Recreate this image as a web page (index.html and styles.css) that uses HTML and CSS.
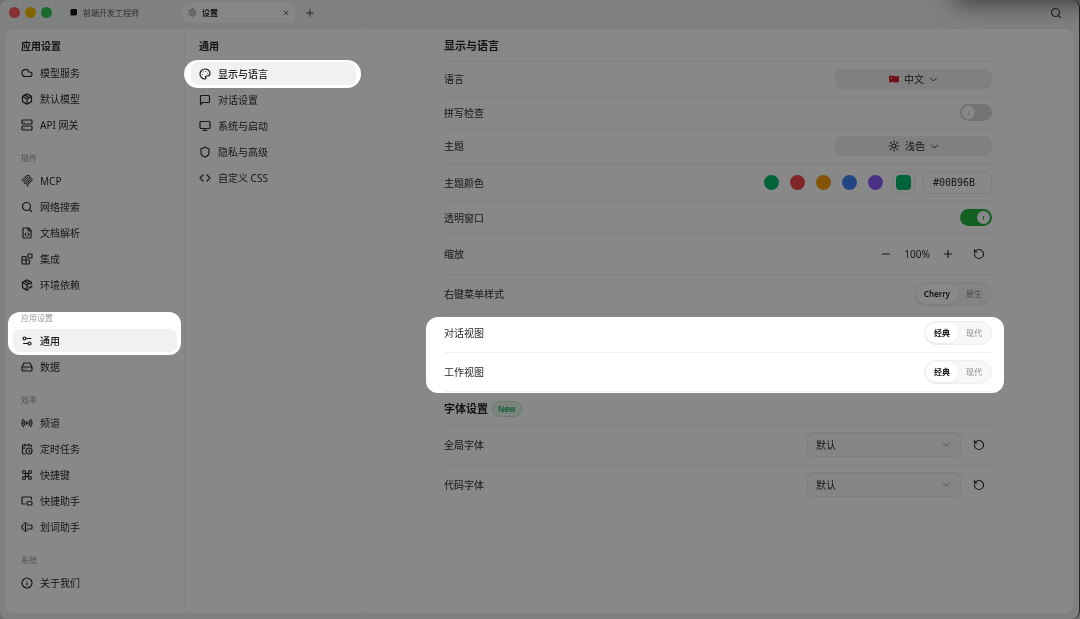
FILE: index.html
```
<!DOCTYPE html>
<html lang="zh-CN">
<head>
  <meta charset="UTF-8">
  <title>设置</title>
  <link rel="stylesheet" href="styles.css">
</head>
<body>
  <div class="window">
    <header class="titlebar">
      <div class="lights">
        <span class="light red"></span>
        <span class="light yellow"></span>
        <span class="light green"></span>
      </div>
      <a class="tab" href="#">
        <svg class="tab-logo" viewBox="0 0 9 9"><rect x="1.500" y="1" width="6.500" height="6" rx="1" fill="#111"/><rect x="1" y="7" width="6" height="1" fill="#888"/></svg>
        前端开发工程师
      </a>
      <div class="tab active">
        <svg class="icon" viewBox="0 0 24 24"><path d="M12.22 2h-.44a2 2 0 0 0-2 2v.18a2 2 0 0 1-1 1.73l-.43.25a2 2 0 0 1-2 0l-.15-.08a2 2 0 0 0-2.73.73l-.22.38a2 2 0 0 0 .73 2.73l.15.1a2 2 0 0 1 1 1.72v.51a2 2 0 0 1-1 1.74l-.15.09a2 2 0 0 0-.73 2.73l.22.38a2 2 0 0 0 2.73.73l.15-.08a2 2 0 0 1 2 0l.43.25a2 2 0 0 1 1 1.73V20a2 2 0 0 0 2 2h.44a2 2 0 0 0 2-2v-.18a2 2 0 0 1 1-1.73l.43-.25a2 2 0 0 1 2 0l.15.08a2 2 0 0 0 2.73-.73l.22-.39a2 2 0 0 0-.73-2.73l-.15-.08a2 2 0 0 1-1-1.74v-.5a2 2 0 0 1 1-1.74l.15-.09a2 2 0 0 0 .73-2.73l-.22-.38a2 2 0 0 0-2.73-.73l-.15.08a2 2 0 0 1-2 0l-.43-.25a2 2 0 0 1-1-1.73V4a2 2 0 0 0-2-2z"/><circle cx="12" cy="12" r="3"/></svg>
        <a href="#">设置</a>
        <button class="tab-close" aria-label="关闭"><svg class="icon" viewBox="0 0 24 24"><path d="M18 6 6 18M6 6l12 12"/></svg></button>
      </div>
      <button class="bar-btn" aria-label="新建"><svg class="icon" viewBox="0 0 24 24"><path d="M4 12h16M12 4v16"/></svg></button>
      <button class="bar-btn search" aria-label="搜索"><svg class="icon" viewBox="0 0 24 24"><circle cx="11" cy="11" r="8"/><path d="m21 21-4.34-4.34"/></svg></button>
    </header>

    <div class="panel">
      <nav class="sidebar">
        <h2>应用设置</h2>
        <ul>
          <li><a href="#"><svg class="icon" viewBox="0 0 24 24"><path d="M17.5 19H9a7 7 0 1 1 6.71-9h1.79a4.5 4.5 0 1 1 0 9Z"/></svg>模型服务</a></li>
          <li><a href="#"><svg class="icon" viewBox="0 0 24 24"><path d="M11 21.73a2 2 0 0 0 2 0l7-4A2 2 0 0 0 21 16V8a2 2 0 0 0-1-1.73l-7-4a2 2 0 0 0-2 0l-7 4A2 2 0 0 0 3 8v8a2 2 0 0 0 1 1.73z"/><path d="M12 22V12M3.29 7 12 12l8.71-5M7.5 4.27l9 5.15"/></svg>默认模型</a></li>
          <li><a href="#"><svg class="icon" viewBox="0 0 24 24"><rect x="2" y="2" width="20" height="8" rx="2"/><rect x="2" y="14" width="20" height="8" rx="2"/><path d="M6 6h.01M6 18h.01"/></svg>API 网关</a></li>
        </ul>
        <h3>插件</h3>
        <ul>
          <li><a href="#"><svg class="icon solid" viewBox="0 0 24 24"><path d="M15.688 2.343a2.588 2.588 0 00-3.61 0l-9.626 9.44a.863.863 0 01-1.203 0 .823.823 0 010-1.18l9.626-9.44a4.313 4.313 0 016.016 0 4.116 4.116 0 011.204 3.54 4.3 4.3 0 013.609 1.18l.05.05a4.115 4.115 0 010 5.9l-8.706 8.537a.274.274 0 000 .393l1.788 1.754a.823.823 0 010 1.18.863.863 0 01-1.203 0l-1.788-1.753a1.92 1.92 0 010-2.754l8.706-8.538a2.47 2.47 0 000-3.54l-.05-.049a2.588 2.588 0 00-3.607-.003l-7.172 7.034-.002.002-.098.097a.863.863 0 01-1.204 0 .823.823 0 010-1.18l7.273-7.133a2.47 2.47 0 00-.003-3.537z"/><path d="M14.485 4.703a.823.823 0 000-1.18.863.863 0 00-1.204 0l-7.119 6.982a4.115 4.115 0 000 5.9 4.314 4.314 0 006.016 0l7.12-6.982a.823.823 0 000-1.18.863.863 0 00-1.204 0l-7.119 6.982a2.588 2.588 0 01-3.61 0 2.47 2.47 0 010-3.54l7.12-6.982z"/></svg>MCP</a></li>
          <li><a href="#"><svg class="icon" viewBox="0 0 24 24"><circle cx="11" cy="11" r="8"/><path d="m21 21-4.34-4.34"/></svg>网络搜索</a></li>
          <li><a href="#"><svg class="icon" viewBox="0 0 24 24"><path d="M15 2H6a2 2 0 0 0-2 2v16a2 2 0 0 0 2 2h12a2 2 0 0 0 2-2V7Z"/><path d="M14 2v4a2 2 0 0 0 2 2h4M10 12.5 8 15l2 2.500M14 12.500l2 2.500-2 2.500"/></svg>文档解析</a></li>
          <li><a href="#"><svg class="icon" viewBox="0 0 24 24"><rect x="14" y="2" width="8" height="8" rx="1"/><path d="M10 21V8a1 1 0 0 0-1-1H4a2 2 0 0 0-2 2v11a2 2 0 0 0 2 2h11a2 2 0 0 0 2-2v-5a1 1 0 0 0-1-1H2"/></svg>集成</a></li>
          <li><a href="#"><svg class="icon" viewBox="0 0 24 24"><path d="m16 16 2 2 4-4"/><path d="M21 10V8a2 2 0 0 0-1-1.730l-7-4a2 2 0 0 0-2 0l-7 4A2 2 0 0 0 3 8v8a2 2 0 0 0 1 1.730l7 4a2 2 0 0 0 2 0l2-1.140"/><path d="m7.500 4.270 9 5.150M3.290 7 12 12l8.710-5M12 22V12"/></svg>环境依赖</a></li>
        </ul>
        <h3>应用设置</h3>
        <ul>
          <li><a class="active" href="#"><svg class="icon" viewBox="0 0 24 24"><path d="M20 7h-9M14 17H5"/><circle cx="17" cy="17" r="3"/><circle cx="7" cy="7" r="3"/></svg>通用</a></li>
          <li><a href="#"><svg class="icon" viewBox="0 0 24 24"><path d="M22 12H2M5.450 5.110 2 12v6a2 2 0 0 0 2 2h16a2 2 0 0 0 2-2v-6l-3.450-6.890A2 2 0 0 0 16.760 4H7.240a2 2 0 0 0-1.790 1.110zM6 16h.01M10 16h.01"/></svg>数据</a></li>
        </ul>
        <h3>效率</h3>
        <ul>
          <li><a href="#"><svg class="icon" viewBox="0 0 24 24"><path d="M4.900 19.100C1 15.200 1 8.800 4.900 4.900M7.800 16.200c-2.300-2.300-2.300-6.100 0-8.500M16.200 7.800c2.300 2.300 2.300 6.100 0 8.500M19.100 4.900C23 8.800 23 15.100 19.100 19"/><circle cx="12" cy="12" r="2"/></svg>频道</a></li>
          <li><a href="#"><svg class="icon" viewBox="0 0 24 24"><path d="M16 14v2.200l1.600 1M16 2v4M21 7.500V6a2 2 0 0 0-2-2H5a2 2 0 0 0-2 2v14a2 2 0 0 0 2 2h3.500M3 10h5M8 2v4"/><circle cx="16" cy="16" r="6"/></svg>定时任务</a></li>
          <li><a href="#"><svg class="icon" viewBox="0 0 24 24"><path d="M15 6v12a3 3 0 1 0 3-3H6a3 3 0 1 0 3 3V6a3 3 0 1 0-3 3h12a3 3 0 1 0-3-3"/></svg>快捷键</a></li>
          <li><a href="#"><svg class="icon" viewBox="0 0 24 24"><path d="M21 9V6a2 2 0 0 0-2-2H4a2 2 0 0 0-2 2v10c0 1.100.900 2 2 2h4"/><rect x="12" y="13" width="10" height="7" rx="2"/></svg>快捷助手</a></li>
          <li><a href="#"><svg class="icon" viewBox="0 0 24 24"><path d="M12 20h-1a2 2 0 0 1-2-2 2 2 0 0 1-2 2H6M13 8h7a2 2 0 0 1 2 2v4a2 2 0 0 1-2 2h-7M5 16H4a2 2 0 0 1-2-2v-4a2 2 0 0 1 2-2h1M6 4h1a2 2 0 0 1 2 2 2 2 0 0 1 2-2h1M9 6v12"/></svg>划词助手</a></li>
        </ul>
        <h3>系统</h3>
        <ul>
          <li><a href="#"><svg class="icon" viewBox="0 0 24 24"><circle cx="12" cy="12" r="10"/><path d="M12 16v-4M12 8h.01"/></svg>关于我们</a></li>
        </ul>
      </nav>

      <nav class="sidebar sub">
        <h2>通用</h2>
        <ul>
          <li><a class="active" href="#"><svg class="icon" viewBox="0 0 24 24"><path d="M12 22a1 1 0 0 1 0-20 10 9 0 0 1 10 9 5 5 0 0 1-5 5h-2.250a1.750 1.750 0 0 0-1.400 2.800l.3.4a1.750 1.750 0 0 1-1.400 2.800z"/><path d="M13.500 6.500h.01M17.500 10.500h.01M6.500 12.500h.01M8.500 7.500h.01"/></svg>显示与语言</a></li>
          <li><a href="#"><svg class="icon" viewBox="0 0 24 24"><path d="M21 15a2 2 0 0 1-2 2H7l-4 4V5a2 2 0 0 1 2-2h14a2 2 0 0 1 2 2z"/></svg>对话设置</a></li>
          <li><a href="#"><svg class="icon" viewBox="0 0 24 24"><rect x="2" y="3" width="20" height="14" rx="2"/><path d="M8 21h8M12 17v4"/></svg>系统与启动</a></li>
          <li><a href="#"><svg class="icon" viewBox="0 0 24 24"><path d="M20 13c0 5-3.500 7.500-7.660 8.950a1 1 0 0 1-.67-.01C7.500 20.500 4 18 4 13V6a1 1 0 0 1 1-1c2 0 4.500-1.200 6.240-2.720a1.170 1.170 0 0 1 1.520 0C14.510 3.810 17 5 19 5a1 1 0 0 1 1 1z"/></svg>隐私与高级</a></li>
          <li><a href="#"><svg class="icon" viewBox="0 0 24 24"><path d="m16 18 6-6-6-6M8 6l-6 6 6 6"/></svg>自定义 CSS</a></li>
        </ul>
      </nav>

      <main class="content">
        <h1>显示与语言</h1>
        <div class="row">
          <label for="language">语言</label>
          <div class="pill">
            <svg class="flag" viewBox="0 0 10 8"><path d="M0 1q2.500-1 5 0t5-.5v6.500q-2.500 1-5 .3T0 7.500z" fill="#d81e2c"/><path d="m2.300 1.800.4 1 1 .1-.8.600.3 1-.9-.5-.9.5.3-1-.8-.6 1-.1z" fill="#f5a623"/></svg>
            <select id="language"><option>中文</option></select>
            <svg class="icon chevron" viewBox="0 0 24 24"><path d="m4 8 8 8 8-8"/></svg>
          </div>
        </div>
        <div class="row">
          <label for="spell">拼写检查</label>
          <input class="switch" type="checkbox" id="spell">
        </div>
        <div class="row">
          <label for="theme">主题</label>
          <div class="pill">
            <svg class="icon" viewBox="0 0 24 24"><circle cx="12" cy="12" r="4"/><path d="M12 2v2M12 20v2M4.930 4.930l1.410 1.410M17.660 17.660l1.410 1.410M2 12h2M20 12h2M6.340 17.660l-1.410 1.410M19.070 4.930l-1.410 1.410"/></svg>
            <select id="theme"><option>浅色</option></select>
            <svg class="icon chevron" viewBox="0 0 24 24"><path d="m4 8 8 8 8-8"/></svg>
          </div>
        </div>
        <div class="row">
          <label for="color">主题颜色</label>
          <div class="colors">
            <div class="dots">
              <button class="dot c-green" aria-label="绿色"></button>
              <button class="dot c-red" aria-label="红色"></button>
              <button class="dot c-amber" aria-label="橙色"></button>
              <button class="dot c-blue" aria-label="蓝色"></button>
              <button class="dot c-violet" aria-label="紫色"></button>
            </div>
            <button class="picker" aria-label="选择颜色"><span class="c-green"></span></button>
            <input class="hex" type="text" id="color" value="#00B96B">
          </div>
        </div>
        <div class="row">
          <label for="transparent">透明窗口</label>
          <input class="switch" type="checkbox" id="transparent" checked>
        </div>
        <div class="row">
          <span>缩放</span>
          <div class="tools zoom">
            <button class="tool" aria-label="缩小"><svg class="icon" viewBox="0 0 24 24"><path d="M5 12h14"/></svg></button>
            <span class="percent">100%</span>
            <button class="tool" aria-label="放大"><svg class="icon" viewBox="0 0 24 24"><path d="M5 12h14M12 5v14"/></svg></button>
            <button class="tool" aria-label="重置"><svg class="icon" viewBox="0 0 24 24"><path d="M3 12a9 9 0 1 0 9-9 9.750 9.750 0 0 0-6.740 2.740L3 8"/><path d="M3 3v5h5"/></svg></button>
          </div>
        </div>
        <div class="row">
          <span>右键菜单样式</span>
          <div class="segment"><button class="on">Cherry</button><button>原生</button></div>
        </div>
        <div class="row">
          <span>对话视图</span>
          <div class="segment"><button class="on">经典</button><button>现代</button></div>
        </div>
        <div class="row">
          <span>工作视图</span>
          <div class="segment"><button class="on">经典</button><button>现代</button></div>
        </div>
        <h1>字体设置 <span class="badge">New</span></h1>
        <div class="row">
          <label for="font">全局字体</label>
          <div class="tools">
            <div class="select"><select id="font"><option>默认</option></select><svg class="icon chevron" viewBox="0 0 24 24"><path d="m4 8 8 8 8-8"/></svg></div>
            <button class="tool" aria-label="重置"><svg class="icon" viewBox="0 0 24 24"><path d="M3 12a9 9 0 1 0 9-9 9.750 9.750 0 0 0-6.740 2.740L3 8"/><path d="M3 3v5h5"/></svg></button>
          </div>
        </div>
        <div class="row">
          <label for="code-font">代码字体</label>
          <div class="tools">
            <div class="select"><select id="code-font"><option>默认</option></select><svg class="icon chevron" viewBox="0 0 24 24"><path d="m4 8 8 8 8-8"/></svg></div>
            <button class="tool" aria-label="重置"><svg class="icon" viewBox="0 0 24 24"><path d="M3 12a9 9 0 1 0 9-9 9.750 9.750 0 0 0-6.740 2.740L3 8"/><path d="M3 3v5h5"/></svg></button>
          </div>
        </div>
      </main>
    </div>
  </div>

  <!-- dimmed layer, white areas stay bright -->
  <div class="spotlight">
    <div class="spot spot-menu"></div>
    <div class="spot spot-sub"></div>
    <div class="spot spot-rows"></div>
  </div>
  <div class="corner-shadow"></div>
</body>
</html>
```
FILE: styles.css
```
* { box-sizing: border-box; }
body { margin: 0; position: relative; min-height: 100vh; display: flex; overflow: hidden; background: #d6d0d2; color: #2b2b2b; font: 10px/14px "Noto Sans", "Noto Sans CJK SC", sans-serif; }
button, input, select { margin: 0; padding: 0; border: none; background: none; color: inherit; font: inherit; }
a { color: inherit; text-decoration: none; }
ul { margin: 0; padding: 0; list-style: none; }
.icon { flex: none; width: 12px; height: 12px; fill: none; stroke: currentColor; stroke-width: 2.4; stroke-linecap: round; stroke-linejoin: round; }
.icon.solid { fill: currentColor; stroke: none; }

.window { flex: 1; display: flex; flex-direction: column; background: #edf1f0; border-right: 1px solid #444; border-radius: 8px; }

/* title bar */
.titlebar { display: flex; align-items: center; height: 29px; padding: 0 17px 4px 9px; color: #555; font-size: 8px; }
.lights { display: flex; gap: 5px; margin-right: 17px; }
.light { width: 11px; height: 11px; border-radius: 50%; }
.red { background: #fa5a60; }
.yellow { background: #f5bd00; }
.green { background: #2cc653; }
.tab { display: flex; align-items: center; gap: 5px; width: 113px; height: 20px; }
.tab-logo { width: 9px; height: 9px; }
.tab .icon { width: 9px; height: 9px; }
.tab.active { padding: 0 5px 0 6px; border-radius: 6px; background: #f9fbfa; color: #222; font-weight: 600; }
.tab.active > .icon { color: #777; }
.tab-close { display: flex; margin-left: auto; color: #555; }
.tab-close .icon { width: 8px; height: 8px; }
.bar-btn { display: flex; margin-left: 10px; color: #444; }
.bar-btn .icon { width: 10px; height: 10px; }
.bar-btn.search { margin-left: auto; }
.bar-btn.search .icon { width: 12px; height: 12px; }

/* columns */
.panel { flex: 1; display: flex; margin: 0 6px 6px; border-radius: 8px; background: #fff; }
.sidebar { width: 179px; padding: 0 7px; border-right: 1px solid #f3f3f3; }
.sidebar.sub { width: 178px; padding: 0 6px; }
.sidebar h2 { margin: 0; padding: 2px 8px 0; font-size: 10px; font-weight: 600; line-height: 30px; color: #222; }
.sidebar.sub h2 { line-height: 31px; }
.sidebar h3 { margin: 16px 0 5px; padding: 0 8px; font-size: 8px; font-weight: 400; line-height: 12px; color: #999; }
.sidebar ul { display: flex; flex-direction: column; gap: 3px; }
.sidebar li a { display: flex; align-items: center; gap: 7px; height: 23px; padding: 0 8px; border-radius: 7px; }
.sidebar a.active { background: #f1f1f1; color: #1a1a1a; font-weight: 500; }

/* settings */
.content { flex: 1; padding: 0 81px; }
.content h1 { display: flex; align-items: center; gap: 4px; height: 33px; margin: 0; padding-top: 2px; border-bottom: 1px solid #f2f2f2; font-size: 11px; font-weight: 600; color: #222; }
.row { display: flex; align-items: center; justify-content: space-between; padding: 7px 0; border-bottom: 1px solid #f2f2f2; }
.row:last-child { border-bottom: none; }
.pill { display: flex; align-items: center; justify-content: center; gap: 5px; width: 157px; height: 20px; border-radius: 7px; background: #f0f0f0; }
.pill select { appearance: none; }
.pill .chevron { width: 9px; height: 9px; }
.flag { width: 10px; height: 8px; }
.switch { appearance: none; display: flex; align-items: center; width: 32px; height: 17px; padding: 2px; border-radius: 9px; background: #d8d8d8; }
.switch::before { content: ""; width: 13px; height: 13px; border-radius: 50%; background: linear-gradient(#d4d4d4, #d4d4d4) center / 1px 4px no-repeat #fff; }
.switch:checked { justify-content: flex-end; background: #24b33c; }
.switch:checked::before { background: linear-gradient(#24b33c, #24b33c) center / 1px 4px no-repeat #fff; }

.colors { display: flex; align-items: center; gap: 8px; }
.dots { display: flex; gap: 11px; margin-right: 1px; }
.dot { width: 15px; height: 15px; border-radius: 50%; }
.c-green { background: #00b96b; }
.c-red { background: #ef4444; }
.c-amber { background: #f59e0b; }
.c-blue { background: #3b82f6; }
.c-violet { background: #8b5cf6; }
.picker { width: 23px; height: 23px; padding: 3px; border: 1px solid #ebebeb; border-radius: 6px; }
.picker span { display: block; height: 15px; border-radius: 4px; }
.hex { width: 69px; height: 23px; padding: 0 9px; border: 1px solid #ebebeb; border-radius: 6px; font-family: "DejaVu Sans Mono", monospace; }

.tools { display: flex; align-items: center; gap: 5px; }
.tools.zoom { height: 26px; }
.tool { display: flex; align-items: center; justify-content: center; width: 26px; height: 25px; }
.percent { width: 26px; text-align: center; }
.segment { display: flex; height: 24px; padding: 1px; border: 1px solid #eee; border-radius: 12px; background: #f7f7f7; color: #888; font-size: 8px; }
.segment button { padding: 0 8px; border-radius: 10px; }
.segment .on { background: #fff; color: #222; font-weight: 600; box-shadow: 0 1px 2px rgba(0,0,0,0.06); }
.badge { padding: 0 5px; border: 1px solid #bfeacd; border-radius: 8px; background: #e6f7ec; color: #18a860; font-size: 8px; line-height: 14px; }
.select { position: relative; }
.select select { appearance: none; width: 154px; height: 25px; padding: 0 8px; border: 1px solid #ebebeb; border-radius: 6px; background: #f9f9f9; }
.select .chevron { position: absolute; top: 8px; right: 10px; width: 9px; height: 9px; color: #888; pointer-events: none; }

/* overlay */
.spotlight { position: absolute; inset: 0; background: #888; mix-blend-mode: multiply; pointer-events: none; }
.spot { position: absolute; background: #fff; }
.spot-menu { left: 8px; top: 312px; width: 173px; height: 43px; border-radius: 12px; }
.spot-sub { left: 184px; top: 60px; width: 177px; height: 28px; border-radius: 14px; }
.spot-rows { left: 426px; right: 76px; top: 317px; height: 76px; border-radius: 12px; }
.corner-shadow { position: absolute; top: -20px; left: 956px; right: -20px; height: 18px; box-shadow: 0 2px 24px 2px rgba(0,0,0,0.6); pointer-events: none; }
```
